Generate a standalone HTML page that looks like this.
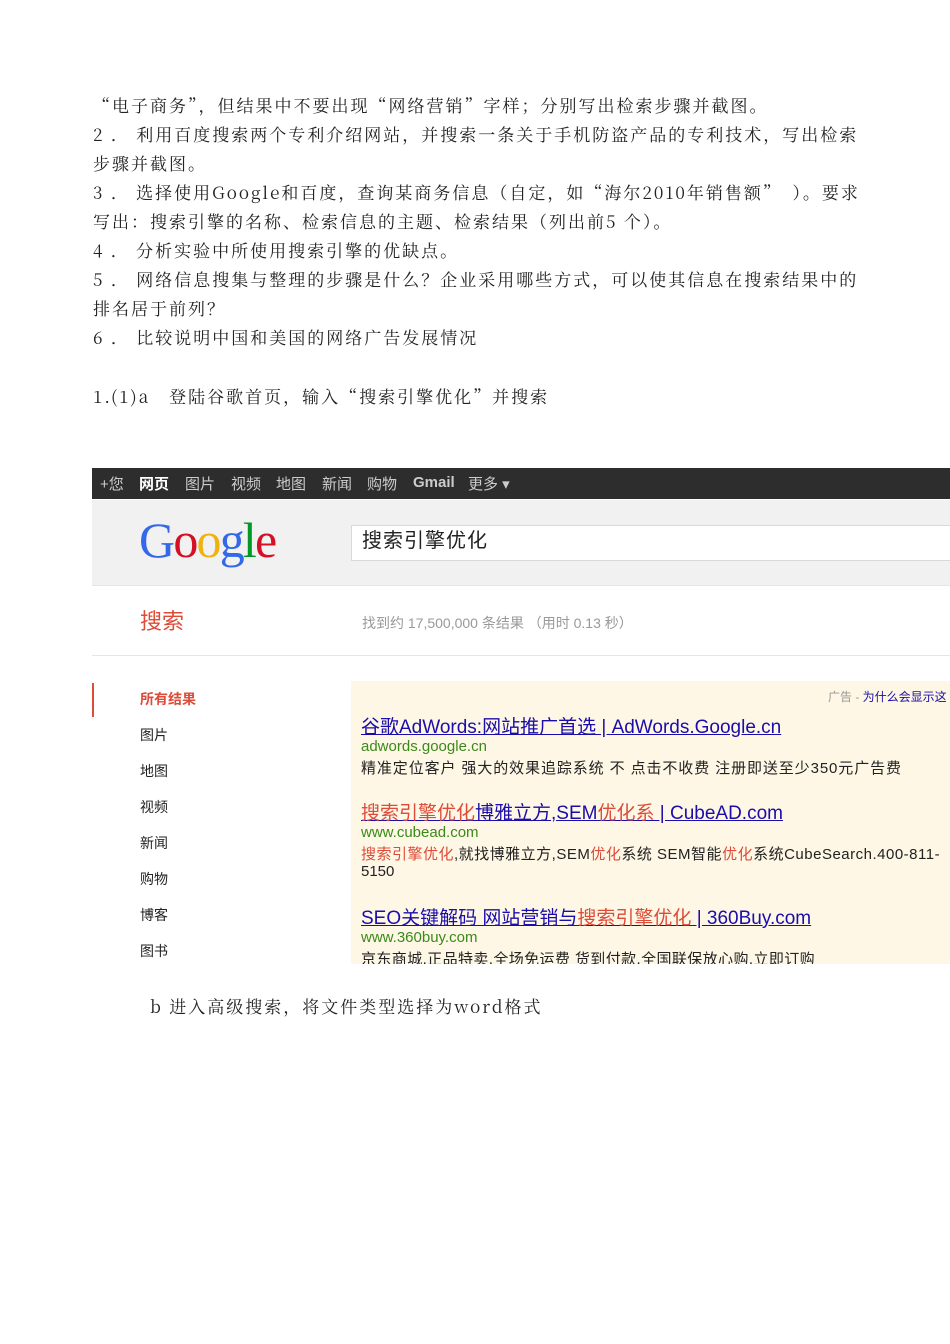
<!DOCTYPE html>
<html><head><meta charset="utf-8"><style>
body{margin:0;background:#fff;width:950px;height:1344px;position:relative;overflow:hidden;font-family:"Noto Serif CJK SC","Liberation Serif",serif;}
.t{position:absolute;left:93px;font-size:17px;color:#222;white-space:nowrap;line-height:20px;letter-spacing:2px}
.s{position:absolute;font-family:"Liberation Sans","Noto Sans CJK SC",sans-serif;white-space:nowrap}
.bar{position:absolute;left:92px;top:468px;width:858px;height:31px;background:#2d2d2d}
.bar span{color:#ccc;font-size:15px;position:absolute;top:5px}
a{color:#1a0dab;text-decoration:underline}
.r{color:#dd4b39}
</style></head><body>
<div class="t" style="top:95px">“电子商务”，但结果中不要出现“网络营销”字样；分别写出检索步骤并截图。</div>
<div class="t" style="top:124px">2 ． 利用百度搜索两个专利介绍网站，并搜索一条关于手机防盗产品的专利技术，写出检索</div>
<div class="t" style="top:153px">步骤并截图。</div>
<div class="t" style="top:182px">3 ． 选择使用Google和百度，查询某商务信息（自定，如“海尔2010年销售额”　）。要求</div>
<div class="t" style="top:211px">写出：搜索引擎的名称、检索信息的主题、检索结果（列出前5 个）。</div>
<div class="t" style="top:240px">4 ． 分析实验中所使用搜索引擎的优缺点。</div>
<div class="t" style="top:269px">5 ． 网络信息搜集与整理的步骤是什么？企业采用哪些方式，可以使其信息在搜索结果中的</div>
<div class="t" style="top:298px">排名居于前列？</div>
<div class="t" style="top:327px">6 ． 比较说明中国和美国的网络广告发展情况</div>
<div class="t" style="top:386px">1.(1)a　登陆谷歌首页，输入“搜索引擎优化”并搜索</div>

<div class="bar s">
<span style="left:8px">+您</span><span style="left:47px;color:#fff;font-weight:bold">网页</span><span style="left:93px">图片</span><span style="left:139px">视频</span><span style="left:184px">地图</span><span style="left:230px">新闻</span><span style="left:275px">购物</span><span style="left:321px;font-weight:bold;top:6px">Gmail</span><span style="left:376px">更多 ▾</span>
</div>
<div style="position:absolute;left:92px;top:500px;width:858px;height:85px;background:#f1f1f1;border-bottom:1px solid #e5e5e5"></div>
<div style="position:absolute;left:139px;top:511px;font-family:'Liberation Serif',serif;font-size:50px;letter-spacing:-1.8px"><span style="color:#3369e8">G</span><span style="color:#d50f25">o</span><span style="color:#eeb211">o</span><span style="color:#3369e8">g</span><span style="color:#009925">l</span><span style="color:#d50f25">e</span></div>
<div style="position:absolute;left:351px;top:525px;width:610px;height:34px;background:#fff;border:1px solid #d9d9d9"></div>
<div class="s" style="left:362px;top:524px;font-size:20px;color:#222;letter-spacing:1px">搜索引擎优化</div>
<div class="s" style="left:140px;top:604px;font-size:22px;color:#dd4b39">搜索</div>
<div class="s" style="left:362px;top:613px;font-size:14px;color:#999">找到约 17,500,000 条结果 （用时 0.13 秒）</div>
<div style="position:absolute;left:92px;top:655px;width:858px;height:1px;background:#e5e5e5"></div>
<div style="position:absolute;left:92px;top:683px;width:2px;height:34px;background:#dd4b39"></div>
<div class="s" style="left:140px;top:689px;font-size:14px;color:#dd4b39;font-weight:bold">所有结果</div>
<div class="s" style="left:140px;top:725px;font-size:14px;color:#222">图片</div>
<div class="s" style="left:140px;top:761px;font-size:14px;color:#222">地图</div>
<div class="s" style="left:140px;top:797px;font-size:14px;color:#222">视频</div>
<div class="s" style="left:140px;top:833px;font-size:14px;color:#222">新闻</div>
<div class="s" style="left:140px;top:869px;font-size:14px;color:#222">购物</div>
<div class="s" style="left:140px;top:905px;font-size:14px;color:#222">博客</div>
<div class="s" style="left:140px;top:941px;font-size:14px;color:#222">图书</div>
<div style="position:absolute;left:351px;top:681px;width:599px;height:283px;background:#fef7e5"></div>
<div class="s" style="left:828px;top:688px;font-size:12px;color:#999">广告 - <span style="color:#1a0dab">为什么会显示这</span></div>
<div class="s" style="left:361px;top:712px;font-size:19px"><a>谷歌AdWords:网站推广首选 | AdWords.Google.cn</a></div>
<div class="s" style="left:361px;top:738px;font-size:15px;color:#3a8a1a">adwords.google.cn</div>
<div class="s" style="left:361px;top:757px;font-size:15px;color:#222;letter-spacing:0.9px">精准定位客户 强大的效果追踪系统 不 点击不收费 注册即送至少350元广告费</div>
<div class="s" style="left:361px;top:798px;font-size:19px"><a><span class="r">搜索引擎优化</span>博雅立方,SEM<span class="r">优化系</span> | CubeAD.com</a></div>
<div class="s" style="left:361px;top:824px;font-size:15px;color:#3a8a1a">www.cubead.com</div>
<div class="s" style="left:361px;top:843px;font-size:15px;color:#222;letter-spacing:0.5px"><span class="r">搜索引擎优化</span>,就找博雅立方,SEM<span class="r">优化</span>系统 SEM智能<span class="r">优化</span>系统CubeSearch.400-811-</div>
<div class="s" style="left:361px;top:863px;font-size:15px;color:#222">5150</div>
<div class="s" style="left:361px;top:903px;font-size:19px"><a>SEO关键解码 网站营销与<span class="r">搜索引擎优化</span> | 360Buy.com</a></div>
<div class="s" style="left:361px;top:929px;font-size:15px;color:#3a8a1a">www.360buy.com</div>
<div class="s" style="left:361px;top:948px;font-size:15px;color:#222;height:16px;overflow:hidden;letter-spacing:0.4px">京东商城,正品特卖,全场免运费 货到付款,全国联保放心购,立即订购</div>
<div class="t" style="left:150px;top:996px">b 进入高级搜索，将文件类型选择为word格式</div>
</body></html>
